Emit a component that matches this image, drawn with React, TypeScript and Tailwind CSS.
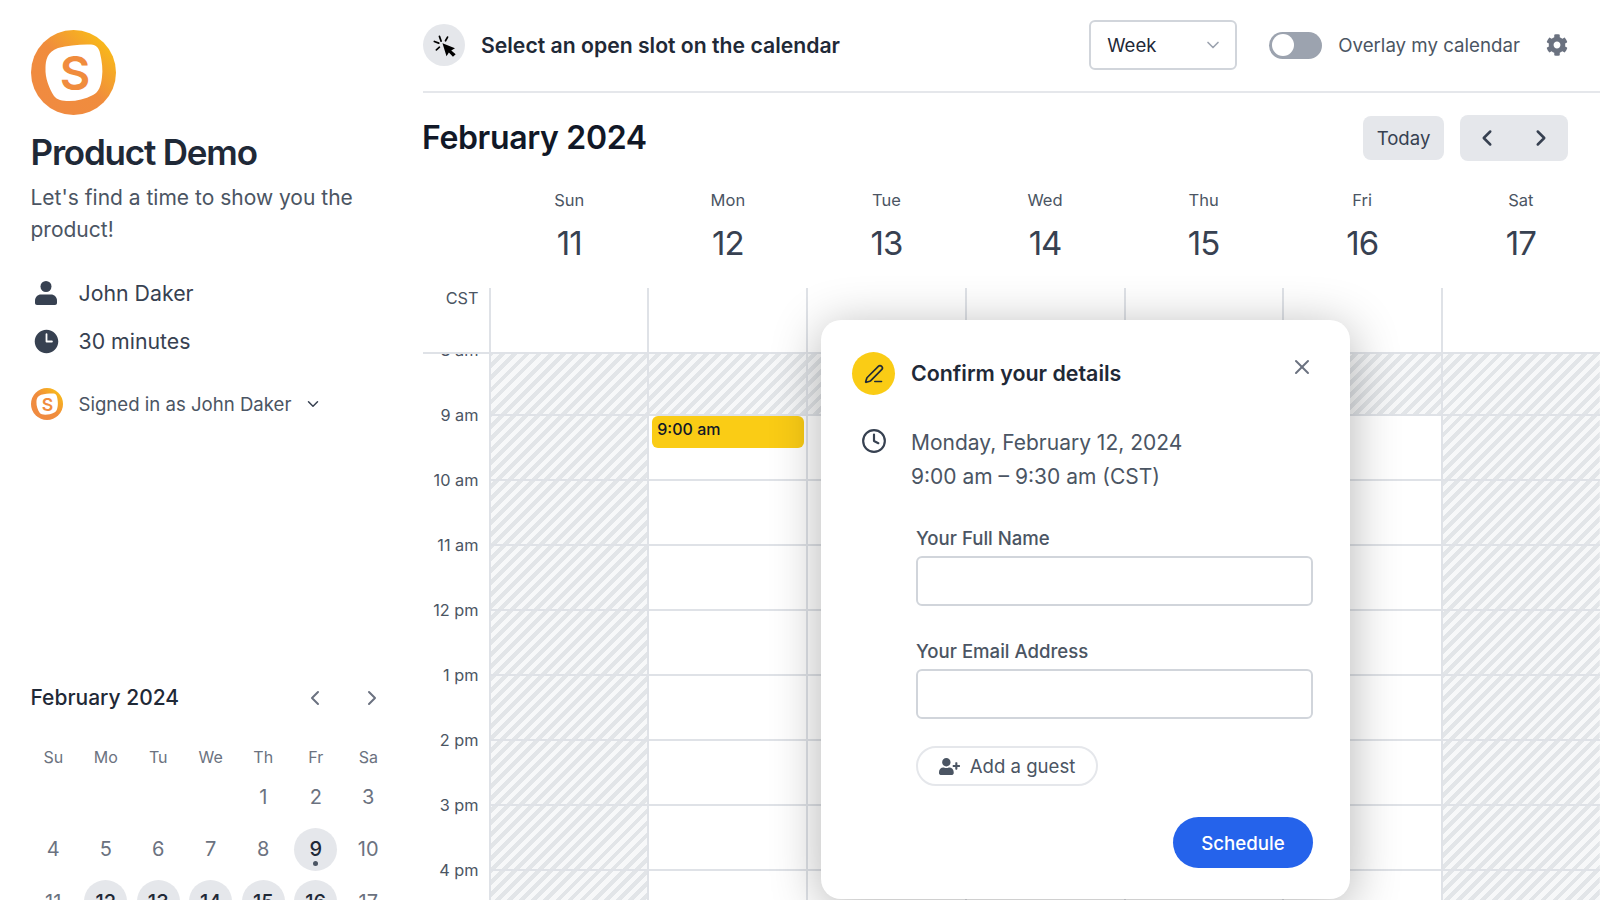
import { ChevronDown, ChevronLeft, ChevronRight, Clock, PenLine, X } from 'lucide-react'
import { FaCog, FaUserPlus } from 'react-icons/fa'
import { HiClock } from 'react-icons/hi2'

const weekDays = [
  { name: 'Sun', date: 11 },
  { name: 'Mon', date: 12 },
  { name: 'Tue', date: 13 },
  { name: 'Wed', date: 14 },
  { name: 'Thu', date: 15 },
  { name: 'Fri', date: 16 },
  { name: 'Sat', date: 17 },
]

const hours = ['8 am', '9 am', '10 am', '11 am', '12 pm', '1 pm', '2 pm', '3 pm', '4 pm']

const miniDays = ['Su', 'Mo', 'Tu', 'We', 'Th', 'Fr', 'Sa']
const miniRows = [
  [null, null, null, null, 1, 2, 3],
  [4, 5, 6, 7, 8, 9, 10],
  [11, 12, 13, 14, 15, 16, 17],
]
const available = [9, 12, 13, 14, 15, 16]

const hatch =
  'bg-fixed bg-[repeating-linear-gradient(135deg,#e2e5e8_0px,#e2e5e8_4.2px,#f7f8f9_4.2px,#f7f8f9_8.5px)]'

function Logo({ size }: { size: number }) {
  return (
    <svg width={size} height={size} viewBox="0 0 85 85" className="shrink-0">
      <defs>
        <linearGradient id={`logo-${size}`} x1="1" y1="0" x2="0" y2="1">
          <stop offset="0.1" stopColor="#f9bd17" />
          <stop offset="0.5" stopColor="#f08c3d" />
          <stop offset="1" stopColor="#f08a42" />
        </linearGradient>
      </defs>
      <circle cx="42.5" cy="42.5" r="42.5" fill={`url(#logo-${size})`} />
      <path
        d="M27 18 C37 15.5 50 14 60 14.5 C65 15 68 18 69 23 C71 31 72 40 71 47 C70 56 68 62 62 65 C54 69 46 71 38 71 C31 71 26 70 23 66 C18 58 14 48 14.5 38 C14.7 30 16 22 27 18 Z"
        fill="#fff"
      />
      <text
        x="44"
        y="60"
        textAnchor="middle"
        fontSize="47"
        fontWeight="600"
        fontFamily="Inter, sans-serif"
        fill="#f08c3d"
      >
        S
      </text>
    </svg>
  )
}

function PersonIcon() {
  return (
    <svg width="22" height="24" viewBox="0 0 22 24" fill="#374151">
      <circle cx="11" cy="5.5" r="5.5" />
      <path d="M6 13.5h10c3.3 0 6 2.7 6 6v2.5c0 1.1-.9 2-2 2H2c-1.1 0-2-.9-2-2v-2.5c0-3.3 2.7-6 6-6z" />
    </svg>
  )
}

function CursorIcon() {
  return (
    <svg width="23" height="23" viewBox="68 100 68 68">
      <path d="M96 127 L133 142 L122 149 L135 160 L127 167 L115 155 L108 166 Z" fill="#000" />
      <path
        d="M87 107 L92 121 M111 109 L105 120 M72 122 L85 127 M78 147 L87 139"
        stroke="#000"
        strokeWidth="5"
        strokeLinecap="round"
        fill="none"
      />
    </svg>
  )
}

function Sidebar() {
  return (
    <aside className="w-[423px] shrink-0 pt-[30px] pr-[30px] pl-[30.5px]">
      <Logo size={85} />
      <h1 className="mt-[14px] text-[35px] leading-[46px] font-semibold tracking-[-1.2px] text-[#1f2937]">
        Product Demo
      </h1>
      <p className="mt-[7px] text-[21px] leading-[32px] text-[#4b5563]">
        Let's find a time to show you the product!
      </p>

      <div className="mt-[31px] flex items-center gap-[17px] text-[21.3px] leading-[32px] text-[#374151]">
        <span className="flex w-[31px] justify-center">
          <PersonIcon />
        </span>
        John Daker
      </div>
      <div className="mt-[16px] flex items-center gap-[17px] text-[21.3px] leading-[32px] text-[#374151]">
        <span className="flex w-[31px] justify-center pl-[1px]">
          <HiClock size={29} />
        </span>
        30 minutes
      </div>
      <div className="mt-[31px] flex items-center gap-[16px] text-[18.6px] leading-[32px] text-[#4b5563]">
        <Logo size={32} />
        <span>Signed in as John Daker</span>
        <ChevronDown size={18} strokeWidth={2} className="ml-[-3px] text-[#374151]" />
      </div>

      <div className="mt-[262px]">
        <div className="flex items-center justify-between">
          <span className="text-[21px] leading-[32px] font-medium text-[#1f2937]">February 2024</span>
          <div className="flex items-center gap-[33px] pr-[9px] text-[#6b7280]">
            <ChevronLeft size={24} />
            <ChevronRight size={24} />
          </div>
        </div>
        <div className="mt-[31px] ml-[-3.5px] grid w-[367.5px] grid-cols-7 text-center">
          {miniDays.map((d) => (
            <span key={d} className="text-[16px] leading-[24px] text-[#6b7280]">
              {d}
            </span>
          ))}
        </div>
        <div className="mt-[-8px]">
          {miniRows.map((row, i) => (
            <div key={i} className="ml-[-3.5px] grid h-[52.5px] w-[367.5px] grid-cols-7">
              {row.map((day, j) => {
                const open = day !== null && available.includes(day)
                return (
                  <div key={j} className="flex items-center justify-center pt-[14px]">
                    {day !== null && (
                      <span
                        className={`relative flex h-[43px] w-[43px] items-center justify-center rounded-full text-[20px] ${
                          open ? 'bg-[#e5e7eb] font-medium text-[#1f2937]' : 'text-[#6b7280]'
                        }`}
                      >
                        {day}
                        {day === 9 && (
                          <span className="absolute bottom-[5px] h-[5px] w-[5px] rounded-full bg-[#4b5563]" />
                        )}
                      </span>
                    )}
                  </div>
                )
              })}
            </div>
          ))}
        </div>
      </div>
    </aside>
  )
}

function TopBar() {
  return (
    <div className="flex h-[93px] items-center border-b-2 border-[#e5e7eb] pr-[32px] pb-[1px]">
      <span className="flex h-[42px] w-[42px] items-center justify-center rounded-full bg-[#e5e7eb]">
        <CursorIcon />
      </span>
      <span className="ml-[16px] pt-[2px] text-[21.2px] font-semibold text-[#1f2937]">
        Select an open slot on the calendar
      </span>
      <div className="ml-auto flex h-[50px] w-[148px] items-center justify-between rounded-md border-2 border-[#d1d5db] pr-[12px] pl-[16px] text-[18.6px] text-[#1f2937]">
        <span className="pt-[2px]">Week</span>
        <ChevronDown size={20} className="text-[#9ca3af]" />
      </div>
      <div className="ml-[32px] flex h-[27px] w-[53px] items-center rounded-full bg-[#9ca3af] pl-[3px]">
        <span className="h-[22px] w-[22px] rounded-full bg-white" />
      </div>
      <span className="ml-[16px] pt-[2px] text-[18.7px] text-[#4b5563]">Overlay my calendar</span>
      <FaCog size={22} className="ml-[26px] text-[#6b7280]" />
    </div>
  )
}

function MonthBar() {
  return (
    <div className="flex h-[92px] items-center justify-between pr-[32px] pb-[2px]">
      <h2 className="ml-[-1px] text-[32px] font-semibold tracking-[-0.35px] text-[#111827]">February 2024</h2>
      <div className="flex items-center gap-[16px]">
        <button className="h-[44px] w-[81px] rounded-lg bg-[#e5e7eb] pt-[1px] text-[18.6px] text-[#374151]">
          Today
        </button>
        <div className="flex h-[46px] w-[108px] items-center justify-around rounded-lg bg-[#e5e7eb] text-[#374151]">
          <ChevronLeft size={26} strokeWidth={2.3} />
          <ChevronRight size={26} strokeWidth={2.3} />
        </div>
      </div>
    </div>
  )
}

function WeekGrid() {
  return (
    <div className="flex h-[715px] flex-col">
      <div className="flex h-[103px] shrink-0 pl-[67px]">
        {weekDays.map((d) => (
          <div key={d.name} className="flex flex-1 flex-col items-center pt-[2px]">
            <span className="text-[16.5px] leading-[26px] text-[#4b5563]">{d.name}</span>
            <span className="mt-[8px] text-[33px] leading-[44px] tracking-[-1px] text-[#374151]">{d.date}</span>
          </div>
        ))}
      </div>
      <div className="flex h-[66px] shrink-0 border-b-[2px] border-[#dfe2e7]">
        <div className="mt-[-1px] w-[65.5px] pr-[10px] text-right text-[16.3px] leading-[22px] text-[#4b5563]">CST</div>
        {weekDays.map((d) => (
          <div key={d.name} className="flex-1 border-l-2 border-[#dfe2e7]" />
        ))}
      </div>
      <div className="flex min-h-0 flex-1 overflow-hidden">
        <div className="w-[65.5px] shrink-0 overflow-hidden">
          <div className="mt-[-36.5px]">
            {hours.map((h) => (
              <div key={h} className="h-[65px] pr-[10px] text-right text-[16.3px] leading-[65px] text-[#4b5563]">
                {h}
              </div>
            ))}
          </div>
        </div>
        {weekDays.map((d) => {
          const allDay = d.name === 'Sun' || d.name === 'Sat'
          return (
            <div key={d.name} className="flex-1 border-l-2 border-[#dfe2e7]">
              <div className={`h-[62px] border-b-2 border-[#dfe2e7] ${hatch}`} />
              {hours.slice(1).map((h) => (
                <div key={h} className={`relative h-[65px] border-b-2 border-[#dfe2e7] ${allDay ? hatch : ''}`}>
                  {d.name === 'Mon' && h === '9 am' && (
                    <div className="absolute top-0 right-[2px] left-[3px] flex h-[32px] items-center rounded-md bg-[#facc15] pb-[6px] pl-[5px] text-[16px] font-medium text-[#111827]">
                      9:00 am
                    </div>
                  )}
                </div>
              ))}
            </div>
          )
        })}
      </div>
    </div>
  )
}

function ConfirmModal() {
  return (
    <div className="absolute top-[320px] left-[820.5px] h-[579px] w-[529.5px] rounded-[20px] bg-white pt-[32px] pr-[32px] pl-[31.5px] shadow-[0_8px_50px_rgba(0,0,0,0.3)]">
      <div className="flex items-center">
        <span className="flex h-[43px] w-[43px] items-center justify-center rounded-full bg-[#facc15]">
          <PenLine size={20} className="text-[#1f2937]" />
        </span>
        <span className="ml-[16px] text-[21.4px] font-semibold text-[#1f2937]">Confirm your details</span>
        <X size={24} className="absolute top-[35px] right-[36px] text-[#6b7280]" />
      </div>
      <div className="mt-[30px] flex">
        <span className="flex w-[43px] shrink-0 justify-center pt-[3px]">
          <Clock size={26} className="text-[#374151]" />
        </span>
        <p className="ml-[16px] pt-[1px] text-[21px] leading-[34px] text-[#4b5563]">
          Monday, February 12, 2024
          <br />
          9:00 am – 9:30 am (CST)
        </p>
      </div>
      <div className="mt-[30px] ml-[64px] w-[397px]">
        <label className="block text-[18.6px] leading-[28px] font-medium text-[#4b5563]">Your Full Name</label>
        <div className="mt-[4px] h-[50px] rounded-md border-2 border-[#d1d5db]" />
        <label className="mt-[31px] block text-[18.6px] leading-[28px] font-medium text-[#4b5563]">
          Your Email Address
        </label>
        <div className="mt-[4px] h-[50px] rounded-md border-2 border-[#d1d5db]" />
        <div className="mt-[27px] flex h-[40px] w-[182px] items-center justify-center gap-[10px] rounded-full border-2 border-[#e5e7eb] pt-[1px] text-[18.6px] text-[#4b5563]">
          <FaUserPlus size={21} />
          Add a guest
        </div>
        <div className="mt-[31px] flex justify-end">
          <button className="h-[51px] w-[140px] rounded-full bg-[#2563eb] pt-[3px] text-[18.7px] font-medium text-white">
            Schedule
          </button>
        </div>
      </div>
    </div>
  )
}

export default function App() {
  return (
    <div className="relative flex h-[900px] overflow-hidden bg-white font-['Inter',sans-serif]">
      <Sidebar />
      <main className="min-w-0 flex-1">
        <TopBar />
        <MonthBar />
        <WeekGrid />
      </main>
      <ConfirmModal />
    </div>
  )
}
